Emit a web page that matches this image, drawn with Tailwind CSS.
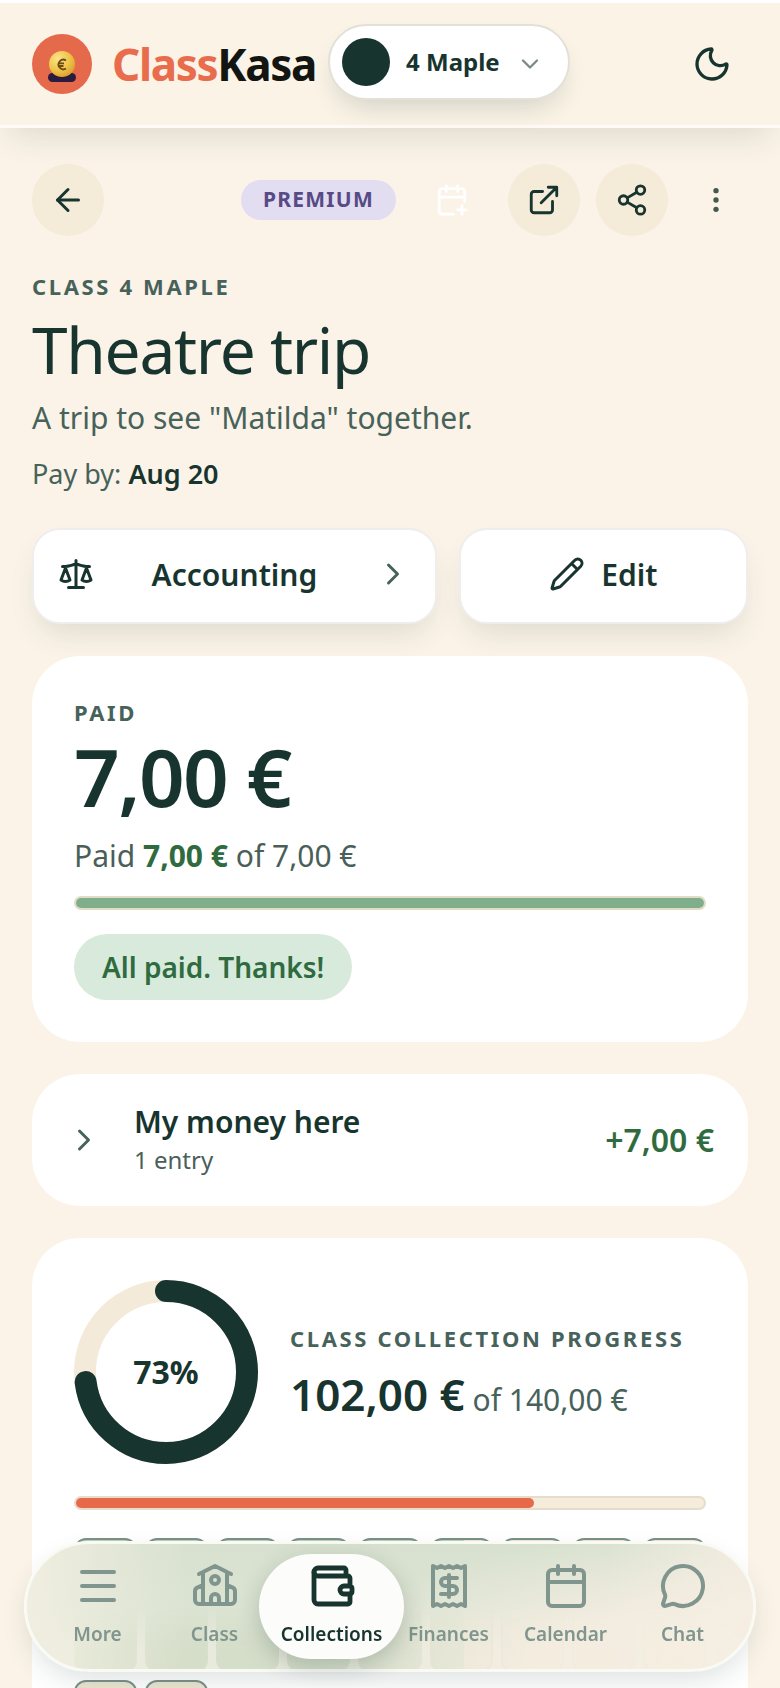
<!DOCTYPE html>
<html lang="en">
<head>
  <meta charset="UTF-8" />
  <meta name="viewport" content="width=device-width, initial-scale=1.0" />
  <title>Theatre trip | ClassKasa</title>
  <script src="https://cdn.jsdelivr.net/npm/@tailwindcss/browser@4"></script>
</head>
<body class="h-screen overflow-hidden bg-[#fbf3e7] text-[#18342f] font-['Noto_Sans',sans-serif]">
  <!-- Header -->
  <header class="relative flex items-center justify-between h-32 pl-8 pr-12 bg-[#faf3e6] border-t-3 border-b-3 border-t-white border-b-[#fffaf5] shadow-[0_16px_32px_-10px_rgba(24,52,47,0.14)]">
    <div class="flex items-center">
      <a href="#" class="flex items-center gap-5">
        <svg class="size-15" viewBox="0 0 60 60" aria-hidden="true">
          <defs>
            <radialGradient id="coin" cx="35%" cy="30%" r="75%">
              <stop offset="0" stop-color="#fbe58a" />
              <stop offset="0.6" stop-color="#efc448" />
              <stop offset="1" stop-color="#d9a02c" />
            </radialGradient>
          </defs>
          <circle cx="30" cy="30" r="30" fill="#e56a4b" />
          <rect x="16" y="39" width="28" height="9" rx="4.5" fill="#2b1b3d" />
          <circle cx="30" cy="30" r="13" fill="url(#coin)" />
          <path d="M34 26.5a4.8 4.8 0 1 0 0 8M26 29.3h6M26 32h5.5" fill="none" stroke="#6e4a12" stroke-width="1.8" />
        </svg>
        <span class="text-[44px] leading-none font-bold tracking-[-0.03em] text-[#e96c4d]">Class<span class="text-[#131512]">Kasa</span></span>
      </a>
      <button type="button" class="flex items-center gap-4 h-19 ml-3 mb-1 pl-3 pr-6 bg-white rounded-full border-2 border-[#e3e1d7] shadow-[0_14px_28px_-10px_rgba(24,52,47,0.2)]">
        <span class="size-12 rounded-full bg-[#18342f]"></span>
        <span class="text-2xl font-bold">4 Maple</span>
        <svg class="size-7 text-[#7d8a86] mt-1" viewBox="0 0 24 24" fill="none" stroke="currentColor" stroke-width="2" stroke-linecap="round" stroke-linejoin="round"><path d="m6 9 6 6 6-6" /></svg>
      </button>
    </div>
    <button type="button" aria-label="Dark mode">
      <svg class="size-10" viewBox="0 0 24 24" fill="none" stroke="currentColor" stroke-width="2" stroke-linecap="round" stroke-linejoin="round"><path d="M20.985 12.486a9 9 0 1 1-9.473-9.472c.405-.022.617.46.402.803a6 6 0 0 0 8.268 8.268c.344-.215.825-.004.803.401" /></svg>
    </button>
  </header>

  <main class="px-8 pt-9">
    <!-- Toolbar -->
    <div class="flex items-center justify-between">
      <button type="button" aria-label="Back" class="size-18 flex items-center justify-center rounded-full bg-[#f4ebd9]">
        <svg class="size-9" viewBox="0 0 24 24" fill="none" stroke="currentColor" stroke-width="2" stroke-linecap="round" stroke-linejoin="round"><path d="m12 19-7-7 7-7" /><path d="M19 12H5" /></svg>
      </button>
      <div class="flex items-center gap-4">
        <span class="flex items-center h-10 px-[22px] rounded-full bg-[#e3ddf1] text-[#574b86] text-[21px] font-bold tracking-[0.06em]">PREMIUM</span>
        <button type="button" aria-label="Add to calendar" class="w-20 h-18 flex items-center justify-center text-white">
          <svg class="size-[34px]" viewBox="0 0 24 24" fill="none" stroke="currentColor" stroke-width="2" stroke-linecap="round" stroke-linejoin="round"><path d="M8 2v4M16 2v4M21 13V6a2 2 0 0 0-2-2H5a2 2 0 0 0-2 2v14a2 2 0 0 0 2 2h8M3 10h18M16 19h6M19 16v6" /></svg>
        </button>
        <button type="button" aria-label="Open" class="size-18 flex items-center justify-center rounded-full bg-[#f4ebd9]">
          <svg class="size-[34px]" viewBox="0 0 24 24" fill="none" stroke="currentColor" stroke-width="2" stroke-linecap="round" stroke-linejoin="round"><path d="M15 3h6v6M10 14 21 3M18 13v6a2 2 0 0 1-2 2H5a2 2 0 0 1-2-2V8a2 2 0 0 1 2-2h6" /></svg>
        </button>
        <button type="button" aria-label="Share" class="size-18 flex items-center justify-center rounded-full bg-[#f4ebd9]">
          <svg class="size-[34px]" viewBox="0 0 24 24" fill="none" stroke="currentColor" stroke-width="2" stroke-linecap="round" stroke-linejoin="round"><circle cx="18" cy="5" r="3" /><circle cx="6" cy="12" r="3" /><circle cx="18" cy="19" r="3" /><path d="m8.59 13.51 6.83 3.98M15.41 6.51l-6.82 3.98" /></svg>
        </button>
        <button type="button" aria-label="More actions" class="w-16 h-18 flex items-center justify-center text-[#41594f]">
          <svg class="size-8" viewBox="0 0 24 24" fill="currentColor"><circle cx="12" cy="5" r="2" /><circle cx="12" cy="12" r="2" /><circle cx="12" cy="19" r="2" /></svg>
        </button>
      </div>
    </div>

    <!-- Title -->
    <section class="pt-[34px]">
      <p class="text-[22px] leading-8 font-bold tracking-[0.12em] text-[#47625a]">CLASS 4 MAPLE</p>
      <h1 class="mt-2 text-[64px] leading-20 tracking-[-0.02em]">Theatre trip</h1>
      <p class="mt-1 text-[30px] leading-12 text-[#47625a]">A trip to see "Matilda" together.</p>
      <p class="mt-3 text-[27px] leading-10 text-[#47625a]">Pay by: <b class="font-semibold text-[#18342f]">Aug 20</b></p>
    </section>

    <div class="mt-[34px] grid grid-cols-[7fr_5fr] gap-[22px]">
      <button type="button" class="h-24 px-6 pb-1 flex items-center justify-between bg-white rounded-[28px] border-2 border-[#efedee] shadow-[0_16px_30px_-8px_rgba(24,52,47,0.13)] text-[30px] font-semibold">
        <svg class="size-9" viewBox="0 0 24 24" fill="none" stroke="currentColor" stroke-width="2" stroke-linecap="round" stroke-linejoin="round"><path d="m16 16 3-8 3 8c-.87.65-1.92 1-3 1s-2.13-.35-3-1ZM2 16l3-8 3 8c-.87.65-1.92 1-3 1s-2.13-.35-3-1ZM7 21h10M12 3v18M3 7h2c2 0 5-1 7-2 2 1 5 2 7 2h2" /></svg>
        Accounting
        <svg class="size-9 text-[#47625a]" viewBox="0 0 24 24" fill="none" stroke="currentColor" stroke-width="2" stroke-linecap="round" stroke-linejoin="round"><path d="m9 18 6-6-6-6" /></svg>
      </button>
      <button type="button" class="h-24 pb-1 flex items-center justify-center gap-4 bg-white rounded-[28px] border-2 border-[#efedee] shadow-[0_16px_30px_-8px_rgba(24,52,47,0.13)] text-[30px] font-semibold">
        <svg class="size-9" viewBox="0 0 24 24" fill="none" stroke="currentColor" stroke-width="2" stroke-linecap="round" stroke-linejoin="round"><path d="M21.174 6.812a1 1 0 0 0-3.986-3.987L3.842 16.174a2 2 0 0 0-.5.83l-1.321 4.352a.5.5 0 0 0 .623.622l4.353-1.32a2 2 0 0 0 .83-.497zM15 5l4 4" /></svg>
        Edit
      </button>
    </div>

    <!-- My payment -->
    <section class="relative mt-8 px-[42px] pt-10 pb-[42px] bg-white rounded-[48px]">
      <p class="text-[22px] leading-8 font-bold tracking-[0.12em] text-[#47625a]">PAID</p>
      <p class="text-[80px] leading-24 font-semibold tracking-[-0.02em]">7,00 €</p>
      <p class="mt-2 text-[30px] leading-12 text-[#4a5f59]">Paid <b class="font-bold text-[#2f6b3f]">7,00 €</b> of 7,00 €</p>
      <div class="mt-4 h-3.5 rounded-full border-2 border-[#e2dcc6] bg-[#f4ead9]">
        <div class="h-full rounded-full bg-[#7fae8a]" style="width: 100%"></div>
      </div>
      <span class="mt-6 inline-flex items-center h-[66px] px-7 rounded-full bg-[#d8eadb] text-[#2f6b3f] text-[28px] font-semibold align-top">All paid. Thanks!</span>
    </section>

    <section class="mt-8 h-[132px] px-[34px] flex items-center bg-white rounded-[48px]">
      <button type="button" class="w-full flex items-center text-left">
        <svg class="size-9 text-[#47625a]" viewBox="0 0 24 24" fill="none" stroke="currentColor" stroke-width="2" stroke-linecap="round" stroke-linejoin="round"><path d="m9 18 6-6-6-6" /></svg>
        <span class="ml-8 flex-1">
          <span class="block text-[30px] leading-10 font-semibold">My money here</span>
          <span class="block text-2xl leading-9 text-[#4a5f59]">1 entry</span>
        </span>
        <span class="text-[32px] font-semibold text-[#2f6b3f]">+7,00 €</span>
      </button>
    </section>

    <!-- Class progress -->
    <section class="mt-8 px-[42px] pt-[42px] pb-10 bg-white rounded-[48px]">
      <div class="flex items-center gap-8">
        <div class="grid place-items-center size-46 shrink-0">
          <svg class="col-start-1 row-start-1 size-full -rotate-90" viewBox="0 0 184 184" fill="none" stroke-width="22">
            <circle cx="92" cy="92" r="81" stroke="#f4ead9" />
            <circle cx="92" cy="92" r="81" stroke="#18342f" stroke-linecap="round" pathLength="100" stroke-dasharray="73 100" />
          </svg>
          <span class="col-start-1 row-start-1 text-[32px] font-bold">73%</span>
        </div>
        <div class="pt-2">
          <p class="text-[22px] leading-8 font-bold tracking-[0.12em] text-[#47625a]">CLASS COLLECTION PROGRESS</p>
          <p class="mt-2.5 text-[30px] leading-15 text-[#47625a]"><b class="text-[44px] font-semibold text-[#18342f]">102,00 €</b> of 140,00 €</p>
        </div>
      </div>
      <div class="mt-8 h-3.5 rounded-full border-2 border-[#e5dccb] bg-[#f5ecdc]">
        <div class="h-full rounded-full bg-[#e66a4a]" style="width: 73%"></div>
      </div>
      <!-- One box per pupil -->
      <div class="mt-7 grid grid-cols-9 gap-2">
        <div class="h-[134px] rounded-xl border-2 border-[#c3d2bd] border-t-[#7b9188] bg-[#bbd3ba]"></div>
        <div class="h-[134px] rounded-xl border-2 border-[#c3d2bd] border-t-[#7b9188] bg-[#bbd3ba]"></div>
        <div class="h-[134px] rounded-xl border-2 border-[#c3d2bd] border-t-[#7b9188] bg-[#bbd3ba]"></div>
        <div class="h-[134px] rounded-xl border-2 border-[#c3d2bd] border-t-[#7b9188] bg-[#bbd3ba]"></div>
        <div class="h-[134px] rounded-xl border-2 border-[#c3d2bd] border-t-[#7b9188] bg-[#bbd3ba]"></div>
        <div class="h-[134px] rounded-xl border-2 border-[#c3c9b8] border-t-[#7b9188] bg-linear-to-r from-[#bbd3ba] from-55% to-[#f0e6d2] to-55%"></div>
        <div class="h-[134px] rounded-xl border-2 border-[#c3c9b8] border-t-[#7b9188] bg-[#f0e6d2]"></div>
        <div class="h-[134px] rounded-xl border-2 border-[#c3c9b8] border-t-[#7b9188] bg-[#f0e6d2]"></div>
        <div class="h-[134px] rounded-xl border-2 border-[#c3c9b8] border-t-[#7b9188] bg-[#f0e6d2]"></div>
        <div class="h-[134px] rounded-xl border-2 border-[#7b9188] bg-[#ebe5d1]"></div>
        <div class="h-[134px] rounded-xl border-2 border-[#7b9188] bg-[#ebe5d1]"></div>
      </div>
    </section>
  </main>

  <!-- Bottom navigation -->
  <nav class="fixed bottom-4 inset-x-6 px-3 py-[10px] rounded-full border-3 border-[#fafaf5] bg-[radial-gradient(55%_110%_at_95%_100%,#f6eee2d8_45%,#f6eee200_100%),linear-gradient(to_right,#f0eee0_0%,#f0eee000_22%,#f4eee200_80%,#f4eee2d0_98%),linear-gradient(to_bottom,#d8e1cf_0%,#dbe3d2_50%,#dfe2cfb8_85%)] shadow-[0_12px_28px_-4px_rgba(24,52,47,0.14)]">
    <ul class="grid grid-cols-6 text-[19px] leading-7 font-semibold text-[#80958d]">
      <li>
        <a href="#" class="flex flex-col items-center h-[105px] pt-2 gap-2.5">
          <svg class="size-12 shrink-0" viewBox="0 0 24 24" fill="none" stroke="currentColor" stroke-width="2" stroke-linecap="round" stroke-linejoin="round"><path d="M4 5h16M4 12h16M4 19h16" /></svg>
          More
        </a>
      </li>
      <li>
        <a href="#" class="flex flex-col items-center h-[105px] pt-2 gap-2.5">
          <svg class="size-12 shrink-0" viewBox="0 0 24 24" fill="none" stroke="currentColor" stroke-width="2" stroke-linecap="round" stroke-linejoin="round"><path d="m4 6 8-4 8 4M6 5v16M18 5v16M6 11.500l-2.900 1.300A2 2 0 0 0 2 14.500v4.500a2 2 0 0 0 2 2h16a2 2 0 0 0 2-2v-4.500a2 2 0 0 0-1.100-1.700L18 11.500M14 21v-3a2 2 0 0 0-4 0v3" /><circle cx="12" cy="9" r="2" /></svg>
          Class
        </a>
      </li>
      <li class="relative -mx-3.5">
        <a href="#" aria-current="page" class="flex flex-col items-center h-[105px] pt-2 gap-2.5 rounded-full bg-[#fcfcfa] text-[#18342f] shadow-[0_8px_24px_rgba(24,52,47,0.22)]">
          <svg class="size-12 shrink-0" viewBox="0 0 24 24" fill="none" stroke="currentColor" stroke-width="2.400" stroke-linecap="round" stroke-linejoin="round"><path d="M19 7V4a1 1 0 0 0-1-1H5a2 2 0 0 0 0 4h15a1 1 0 0 1 1 1v4h-3a2 2 0 0 0 0 4h3a1 1 0 0 0 1-1v-2a1 1 0 0 0-1-1" /><path d="M3 5v14a2 2 0 0 0 2 2h15a1 1 0 0 0 1-1v-4" /></svg>
          Collections
        </a>
      </li>
      <li>
        <a href="#" class="flex flex-col items-center h-[105px] pt-2 gap-2.5">
          <svg class="size-12 shrink-0" viewBox="0 0 24 24" fill="none" stroke="currentColor" stroke-width="2" stroke-linecap="round" stroke-linejoin="round"><path d="M4 2v20l2-1 2 1 2-1 2 1 2-1 2 1 2-1 2 1V2l-2 1-2-1-2 1-2-1-2 1-2-1-2 1Z" /><path d="M16 8h-6a2 2 0 1 0 0 4h4a2 2 0 1 1 0 4H8M12 17.500v-11" /></svg>
          Finances
        </a>
      </li>
      <li>
        <a href="#" class="flex flex-col items-center h-[105px] pt-2 gap-2.5">
          <svg class="size-12 shrink-0" viewBox="0 0 24 24" fill="none" stroke="currentColor" stroke-width="2" stroke-linecap="round" stroke-linejoin="round"><path d="M8 2v4M16 2v4M3 10h18" /><rect x="3" y="4" width="18" height="18" rx="2" /></svg>
          Calendar
        </a>
      </li>
      <li>
        <a href="#" class="flex flex-col items-center h-[105px] pt-2 gap-2.5">
          <svg class="size-12 shrink-0" viewBox="0 0 24 24" fill="none" stroke="currentColor" stroke-width="2" stroke-linecap="round" stroke-linejoin="round"><path d="M2.992 16.342a2 2 0 0 1 .094 1.167l-1.065 3.290a1 1 0 0 0 1.236 1.168l3.413-.998a2 2 0 0 1 1.099.092 10 10 0 1 0-4.777-4.719" /></svg>
          Chat
        </a>
      </li>
    </ul>
  </nav>
</body>
</html>
